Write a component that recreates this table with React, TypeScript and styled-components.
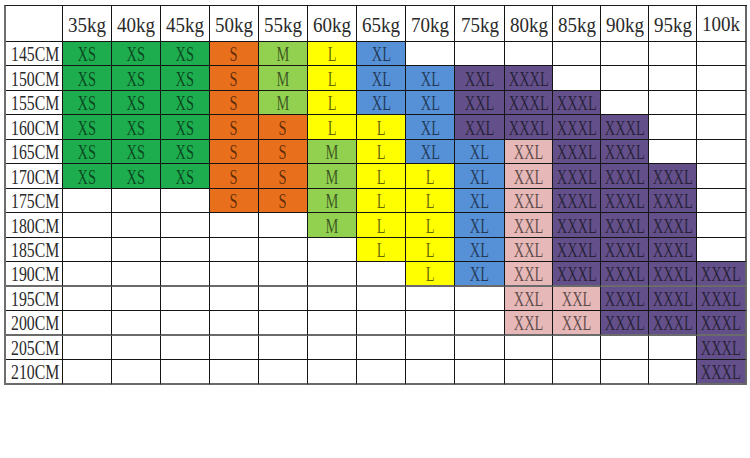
import React from "react";
import styled, { createGlobalStyle } from "styled-components";

const GlobalStyle = createGlobalStyle`
  html, body { margin: 0; padding: 0; background: #ffffff; }
  body { font-family: "Liberation Serif", "Times New Roman", serif; }
`;

const COLORS: Record<string, string> = {
  g: "#1dac4e",
  o: "#e8701c",
  m: "#92d050",
  y: "#ffff00",
  b: "#5690d7",
  p: "#63508a",
  k: "#e6b8b7",
};

const SIZE_COLOR: Record<string, string> = {
  XS: "g",
  S: "o",
  M: "m",
  L: "y",
  XL: "b",
  XXL: "k",
  XXXL: "p",
};

const WEIGHTS = ["35kg", "40kg", "45kg", "50kg", "55kg", "60kg", "65kg", "70kg", "75kg", "80kg", "85kg", "90kg", "95kg", "100k"];
const COL_WIDTHS = [57, 49, 49, 49, 49, 49, 49, 49, 49, 50, 48, 48, 48, 48, 50];

// "XXL!" marks a purple XXL cell
const ROWS: { label: string; cells: string }[] = [
  { label: "145CM", cells: "XS XS XS S M L XL" },
  { label: "150CM", cells: "XS XS XS S M L XL XL XXL! XXXL" },
  { label: "155CM", cells: "XS XS XS S M L XL XL XXL! XXXL XXXL" },
  { label: "160CM", cells: "XS XS XS S S L L XL XXL! XXXL XXXL XXXL" },
  { label: "165CM", cells: "XS XS XS S S M L XL XL XXL XXXL XXXL" },
  { label: "170CM", cells: "XS XS XS S S M L L XL XXL XXXL XXXL XXXL" },
  { label: "175CM", cells: "- - - S S M L L XL XXL XXXL XXXL XXXL" },
  { label: "180CM", cells: "- - - - - M L L XL XXL XXXL XXXL XXXL" },
  { label: "185CM", cells: "- - - - - - L L XL XXL XXXL XXXL XXXL" },
  { label: "190CM", cells: "- - - - - - - L XL XXL XXXL XXXL XXXL XXXL" },
  { label: "195CM", cells: "- - - - - - - - - XXL XXL XXXL XXXL XXXL" },
  { label: "200CM", cells: "- - - - - - - - - XXL XXL XXXL XXXL XXXL" },
  { label: "205CM", cells: "- - - - - - - - - - - - - XXXL" },
  { label: "210CM", cells: "- - - - - - - - - - - - - XXXL" },
];

const THICK_ROWS = new Set(["190CM", "200CM", "210CM"]);

const Chart = styled.div`
  display: grid;
  grid-template-columns: ${COL_WIDTHS.map((w) => `${w}px`).join(" ")};
  grid-template-rows: 36px ${ROWS.map((_, i) => (i % 2 === 0 ? "24px" : "25px")).join(" ")};
  margin: 5px 0 0 4px;
  width: max-content;
  border-top: 1px solid #1a1a1a;
  border-left: 2px solid #6e6e6e;
`;

const Cell = styled.div<{ $last?: boolean; $thick?: boolean; $bg?: string }>`
  box-sizing: border-box;
  display: flex;
  align-items: center;
  justify-content: center;
  overflow: hidden;
  background: ${(p) => p.$bg || "#ffffff"};
  border-right: ${(p) => (p.$last ? "2px solid #666666" : "1px solid #141414")};
  border-bottom: ${(p) => (p.$thick ? "2px solid #6a6a6a" : "1px solid #141414")};
  font-size: 20px;
  line-height: 1;
  white-space: nowrap;
`;

const HeaderCell = styled(Cell)<{ $wrapped?: boolean }>`
  color: #2a2a2a;
  align-items: ${(p) => (p.$wrapped ? "flex-start" : "center")};
  justify-content: ${(p) => (p.$wrapped ? "flex-start" : "center")};
  padding: ${(p) => (p.$wrapped ? "8px 0 0 5px" : "3px 0 0 0")};
`;

const LabelCell = styled(Cell)`
  justify-content: flex-start;
  padding: 1px 0 0 5px;
  color: #2a2a2a;
`;

const Squeezed = styled.span<{ $origin?: string; $scale: number }>`
  display: inline-block;
  transform: scaleX(${(p) => p.$scale});
  transform-origin: ${(p) => p.$origin || "center"};
`;

const SizeText = styled(Squeezed)`
  color: rgba(0, 0, 0, 0.6);
  padding-top: 1px;
`;

export default function App() {
  return (
    <>
      <GlobalStyle />
      <Chart>
        <HeaderCell />
        {WEIGHTS.map((w, i) => (
          <HeaderCell key={w} $last={i === WEIGHTS.length - 1} $wrapped={w === "100k"}>
            <Squeezed $scale={0.95} $origin={w === "100k" ? "left center" : "center"}>
              {w}
            </Squeezed>
          </HeaderCell>
        ))}
        {ROWS.map((row) => {
          const tokens = row.cells.split(" ");
          const thick = THICK_ROWS.has(row.label);
          return (
            <React.Fragment key={row.label}>
              <LabelCell $thick={thick}>
                <Squeezed $scale={0.79} $origin="left center">
                  {row.label}
                </Squeezed>
              </LabelCell>
              {WEIGHTS.map((w, i) => {
                const tok = tokens[i];
                const empty = !tok || tok === "-";
                const purple = tok && tok.endsWith("!");
                const text = empty ? "" : tok.replace("!", "");
                const bg = empty ? undefined : COLORS[purple ? "p" : SIZE_COLOR[text]];
                return (
                  <Cell key={w} $bg={bg} $thick={thick} $last={i === WEIGHTS.length - 1}>
                    {text && <SizeText $scale={0.72}>{text}</SizeText>}
                  </Cell>
                );
              })}
            </React.Fragment>
          );
        })}
      </Chart>
    </>
  );
}
